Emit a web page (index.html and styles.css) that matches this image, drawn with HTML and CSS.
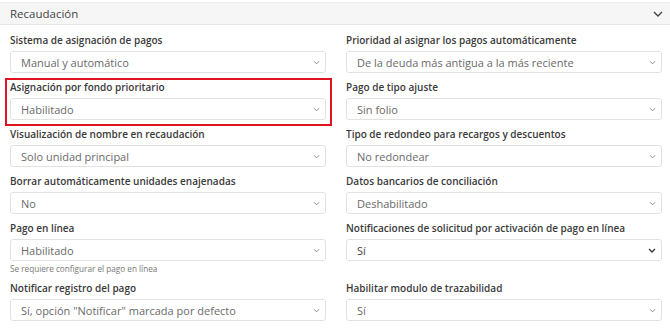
FILE: index.html
```html
<!DOCTYPE html>
<html lang="es">
<head>
<meta charset="utf-8">
<link rel="stylesheet" href="styles.css">
</head>
<body>
<section class="panel">
  <header class="panel-head">
    <span class="panel-title">Recaudación</span>
    <svg class="head-chev" width="10" height="6" viewBox="0 0 10 6"><path d="M1 1 L5 5 L9 1" fill="none" stroke="#444" stroke-width="1.4"/></svg>
  </header>
  <div class="grid">
    <div class="field">
      <label class="lbl">Sistema de asignación de pagos</label>
      <div class="sel"><span>Manual y automático</span><svg class="chev" viewBox="0 0 8 5"><path d="M1 1 L4 4 L7 1"/></svg></div>
    </div>
    <div class="field">
      <label class="lbl">Prioridad al asignar los pagos automáticamente</label>
      <div class="sel"><span>De la deuda más antigua a la más reciente</span><svg class="chev" viewBox="0 0 8 5"><path d="M1 1 L4 4 L7 1"/></svg></div>
    </div>
    <div class="field marked">
      <label class="lbl">Asignación por fondo prioritario</label>
      <div class="sel"><span>Habilitado</span><svg class="chev" viewBox="0 0 8 5"><path d="M1 1 L4 4 L7 1"/></svg></div>
    </div>
    <div class="field">
      <label class="lbl">Pago de tipo ajuste</label>
      <div class="sel"><span>Sin folio</span><svg class="chev" viewBox="0 0 8 5"><path d="M1 1 L4 4 L7 1"/></svg></div>
    </div>
    <div class="field">
      <label class="lbl">Visualización de nombre en recaudación</label>
      <div class="sel"><span>Solo unidad principal</span><svg class="chev" viewBox="0 0 8 5"><path d="M1 1 L4 4 L7 1"/></svg></div>
    </div>
    <div class="field">
      <label class="lbl">Tipo de redondeo para recargos y descuentos</label>
      <div class="sel"><span>No redondear</span><svg class="chev" viewBox="0 0 8 5"><path d="M1 1 L4 4 L7 1"/></svg></div>
    </div>
    <div class="field">
      <label class="lbl">Borrar automáticamente unidades enajenadas</label>
      <div class="sel"><span>No</span><svg class="chev" viewBox="0 0 8 5"><path d="M1 1 L4 4 L7 1"/></svg></div>
    </div>
    <div class="field">
      <label class="lbl">Datos bancarios de conciliación</label>
      <div class="sel"><span>Deshabilitado</span><svg class="chev" viewBox="0 0 8 5"><path d="M1 1 L4 4 L7 1"/></svg></div>
    </div>
    <div class="field">
      <label class="lbl">Pago en línea</label>
      <div class="sel"><span>Habilitado</span><svg class="chev" viewBox="0 0 8 5"><path d="M1 1 L4 4 L7 1"/></svg></div>
      <p class="help">Se requiere configurar el pago en línea</p>
    </div>
    <div class="field">
      <label class="lbl">Notificaciones de solicitud por activación de pago en línea</label>
      <div class="sel active"><span>Sí</span><svg class="chev" viewBox="0 0 8 5"><path d="M1 1 L4 4 L7 1"/></svg></div>
    </div>
    <div class="field">
      <label class="lbl">Notificar registro del pago</label>
      <div class="sel"><span>Sí, opción "Notificar" marcada por defecto</span><svg class="chev" viewBox="0 0 8 5"><path d="M1 1 L4 4 L7 1"/></svg></div>
    </div>
    <div class="field">
      <label class="lbl">Habilitar modulo de trazabilidad</label>
      <div class="sel"><span>Sí</span><svg class="chev" viewBox="0 0 8 5"><path d="M1 1 L4 4 L7 1"/></svg></div>
    </div>
  </div>
</section>
</body>
</html>
```

FILE: styles.css
```css
* { box-sizing: border-box; }
html, body { margin: 0; padding: 0; background: #fff; }
body {
  font-family: "Open Sans", "Liberation Sans", sans-serif;
  color: #333;
  width: 670px;
  height: 335px;
  overflow: hidden;
}
.panel { padding-top: 2px; }
.panel-head {
  height: 23px;
  background: #f6f6f6;
  border-top: 1px solid #ececec;
  border-bottom: 1px solid #e6e6e6;
  display: flex;
  align-items: center;
  justify-content: space-between;
  padding: 0 7px 0 10px;
}
.panel-title {
  font-size: 11.5px;
  color: #444;
}
.head-chev { display: block; }
.grid {
  display: grid;
  grid-template-columns: 316px 316px;
  column-gap: 20px;
  padding: 8px 8px 0 10px;
  align-items: start;
}
.field {
  position: relative;
  margin-bottom: 7px;
}
.marked::after {
  content: "";
  position: absolute;
  left: -5px;
  right: -6px;
  top: -2px;
  bottom: -6px;
  border: 2px solid #e0141e;
  pointer-events: none;
}
.lbl {
  display: block;
  font-size: 10px;
  font-weight: 600;
  color: #3a3a3a;
  line-height: 14px;
  margin-bottom: 4px;
  white-space: nowrap;
}
.sel {
  height: 22px;
  border: 1px solid #e2e2e2;
  border-radius: 3px;
  display: flex;
  align-items: center;
  justify-content: space-between;
  padding: 0 5px 0 10px;
  font-size: 11px;
  color: #6a6a6a;
  background: #fff;
}
.sel.active { color: #444; }
.chev {
  width: 7px;
  height: 5px;
  fill: none;
  stroke: #888;
  stroke-width: 1.1;
}
.sel.active .chev { stroke: #333; stroke-width: 1.3; width: 8px; }
.help {
  margin: 2px 0 0 0;
  font-size: 8.2px;
  line-height: 11px;
  color: #777;
}
```
